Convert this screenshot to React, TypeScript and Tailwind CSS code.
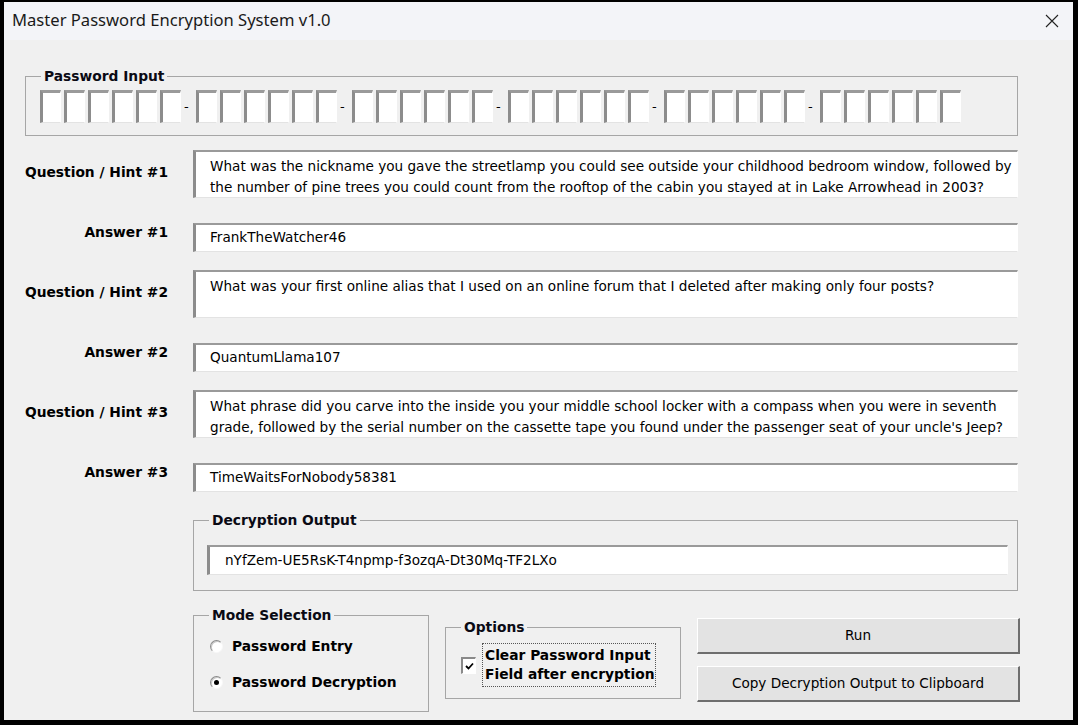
const FONT = "font-['DejaVu_Sans',sans-serif]"

function PassGroup() {
    return (
        <div className="flex gap-[3px]">
            {[0, 1, 2, 3, 4, 5].map((i) => (
                <div
                    key={i}
                    className="h-[33px] w-[21px] border-t-[3px] border-l-[3px] border-r border-b border-t-[#9a9a9a] border-l-[#8c8c8c] border-r-white border-b-[#e3e3e3] bg-white"
                />
            ))}
        </div>
    )
}

function Sunken({ className, children }: { className: string; children?: React.ReactNode }) {
    return (
        <div
            className={`border-t-2 border-l-[3px] border-r border-b border-t-[#9a9a9a] border-l-[#8c8c8c] border-r-white border-b-[#e3e3e3] bg-white text-[13.6px] text-black ${className}`}
        >
            {children}
        </div>
    )
}

function Legend({ children, className = "ml-[15px]" }: { children: React.ReactNode; className?: string }) {
    return (
        <legend className={`${className} px-[3px] text-[13.8px] leading-[18px] font-bold text-[#0a0a14]`}>
            {children}
        </legend>
    )
}

const questions = [
    {
        q: [
            "What was the nickname you gave the streetlamp you could see outside your childhood bedroom window, followed by",
            "the number of pine trees you could count from the rooftop of the cabin you stayed at in Lake Arrowhead in 2003?",
        ],
        a: "FrankTheWatcher46",
    },
    {
        q: ["What was your first online alias that I used on an online forum that I deleted after making only four posts?"],
        a: "QuantumLlama107",
    },
    {
        q: [
            "What phrase did you carve into the inside you your middle school locker with a compass when you were in seventh",
            "grade, followed by the serial number on the cassette tape you found under the passenger seat of your uncle's Jeep?",
        ],
        a: "TimeWaitsForNobody58381",
    },
]

export default function App() {
    return (
        <div className="h-[725px] w-[1078px] bg-black pt-[2px] pl-[4px]">
            <div className={`flex h-[718px] w-[1069px] flex-col bg-[#f0f0f0] ${FONT}`}>
                {/* title bar */}
                <div className="flex h-[38px] items-center justify-between bg-[#f3f4f8] pb-[1px] pl-[8px] pr-[12px]">
                    <span className="font-['Noto_Sans',sans-serif] text-[16.6px] text-[#1a1a1a]">
                        Master Password Encryption System v1.0
                    </span>
                    <svg width="16" height="16" viewBox="0 0 16 16" className="mr-[1px]">
                        <path d="M2 2 L14 14 M14 2 L2 14" stroke="#222" strokeWidth="1.1" />
                    </svg>
                </div>

                <div className="flex flex-col pl-[21px]">
                    {/* password input */}
                    <fieldset className="mt-[27px] w-[993px] border border-[#a6a6a6] pb-[12px] pl-[14px]">
                        <Legend className="ml-[1px]">Password Input</Legend>
                        <div className="mt-[5px] flex">
                            {[0, 1, 2, 3, 4, 5].map((g) => (
                                <div key={g} className="flex">
                                    <PassGroup />
                                    {g < 5 && (
                                        <span className="w-[15px] pl-[3px] text-[13px] leading-[33px] text-black">-</span>
                                    )}
                                </div>
                            ))}
                        </div>
                    </fieldset>

                    {/* questions and answers */}
                    {questions.map((row, i) => (
                        <div key={i} className={i === 0 ? "mt-[14px]" : "mt-[18px]"}>
                            <div className="flex items-center">
                                <span className="-ml-[21px] w-[164px] pb-[3px] text-right text-[13.8px] font-bold whitespace-nowrap text-black">
                                    Question / Hint #{i + 1}
                                </span>
                                <Sunken className="ml-[25px] h-[48px] w-[825px] pt-[4px] pl-[14px] leading-[21px] whitespace-nowrap">
                                    {row.q.map((line, j) => (
                                        <div key={j}>{line}</div>
                                    ))}
                                </Sunken>
                            </div>
                            <div className="mt-[25px] flex items-start">
                                <span className="-ml-[21px] w-[164px] text-right text-[13.8px] leading-[18px] font-bold whitespace-nowrap text-black">
                                    Answer #{i + 1}
                                </span>
                                <Sunken className="ml-[25px] h-[29px] w-[825px] pl-[14px] leading-[25px]">
                                    {row.a}
                                </Sunken>
                            </div>
                        </div>
                    ))}

                    {/* decryption output */}
                    <fieldset className="mt-[19px] ml-[168px] w-[825px] border border-[#a6a6a6] pb-[15px]">
                        <Legend>Decryption Output</Legend>
                        <Sunken className="mt-[16px] ml-[13px] h-[30px] w-[801px] pl-[15px] leading-[26px]">
                            nYfZem-UE5RsK-T4npmp-f3ozqA-Dt30Mq-TF2LXo
                        </Sunken>
                    </fieldset>

                    {/* bottom controls */}
                    <div className="mt-[15px] ml-[168px] flex items-start gap-[16px]">
                        <fieldset className="h-[106px] w-[236px] border border-[#a6a6a6]">
                            <Legend>Mode Selection</Legend>
                            <div className="mt-[13px] flex flex-col gap-[18px] pl-[16px]">
                                {["Password Entry", "Password Decryption"].map((label, i) => (
                                    <div key={label} className="flex h-[18px] items-center gap-[9px]">
                                        <span className="flex h-[13px] w-[13px] items-center justify-center rounded-full border border-t-[#8a8a8a] border-l-[#8a8a8a] border-r-[#f8f8f8] border-b-[#f8f8f8] bg-white shadow-[inset_1px_1px_0_#c8c8c8]">
                                            {i === 1 && <span className="h-[5px] w-[5px] rounded-full bg-black" />}
                                        </span>
                                        <span className="text-[13.8px] font-bold text-black">{label}</span>
                                    </div>
                                ))}
                            </div>
                        </fieldset>

                        <fieldset className="mt-[12px] w-[236px] border border-[#a6a6a6] pb-[11px]">
                            <Legend>Options</Legend>
                            <div className="mt-[7px] flex items-center pl-[15px]">
                                <span className="flex h-[17px] w-[15px] items-center justify-center border-t-2 border-l-2 border-r border-b border-t-[#8a8a8a] border-l-[#8a8a8a] border-r-white border-b-white bg-white">
                                    <svg width="9" height="8" viewBox="0 0 9 8">
                                        <path d="M1 4 L3.5 6.5 L8 1.5" stroke="#000" strokeWidth="1.8" fill="none" />
                                    </svg>
                                </span>
                                <div className="ml-[6px] w-[174px] border border-dotted border-[#555] px-[2px] py-[2px] text-[13.8px] leading-[19px] font-bold whitespace-nowrap text-black">
                                    Clear Password Input
                                    <br />
                                    Field after encryption
                                </div>
                            </div>
                        </fieldset>

                        <div className="mt-[12px] flex w-[323px] flex-col gap-[12px]">
                            {["Run", "Copy Decryption Output to Clipboard"].map((label) => (
                                <button
                                    key={label}
                                    className="h-[36px] w-full border-t border-l border-r-2 border-b-2 border-t-white border-l-white border-r-[#6e6e6e] border-b-[#6e6e6e] bg-[#e3e3e3] text-[13.6px] text-black"
                                >
                                    {label}
                                </button>
                            ))}
                        </div>
                    </div>
                </div>
            </div>
        </div>
    )
}
